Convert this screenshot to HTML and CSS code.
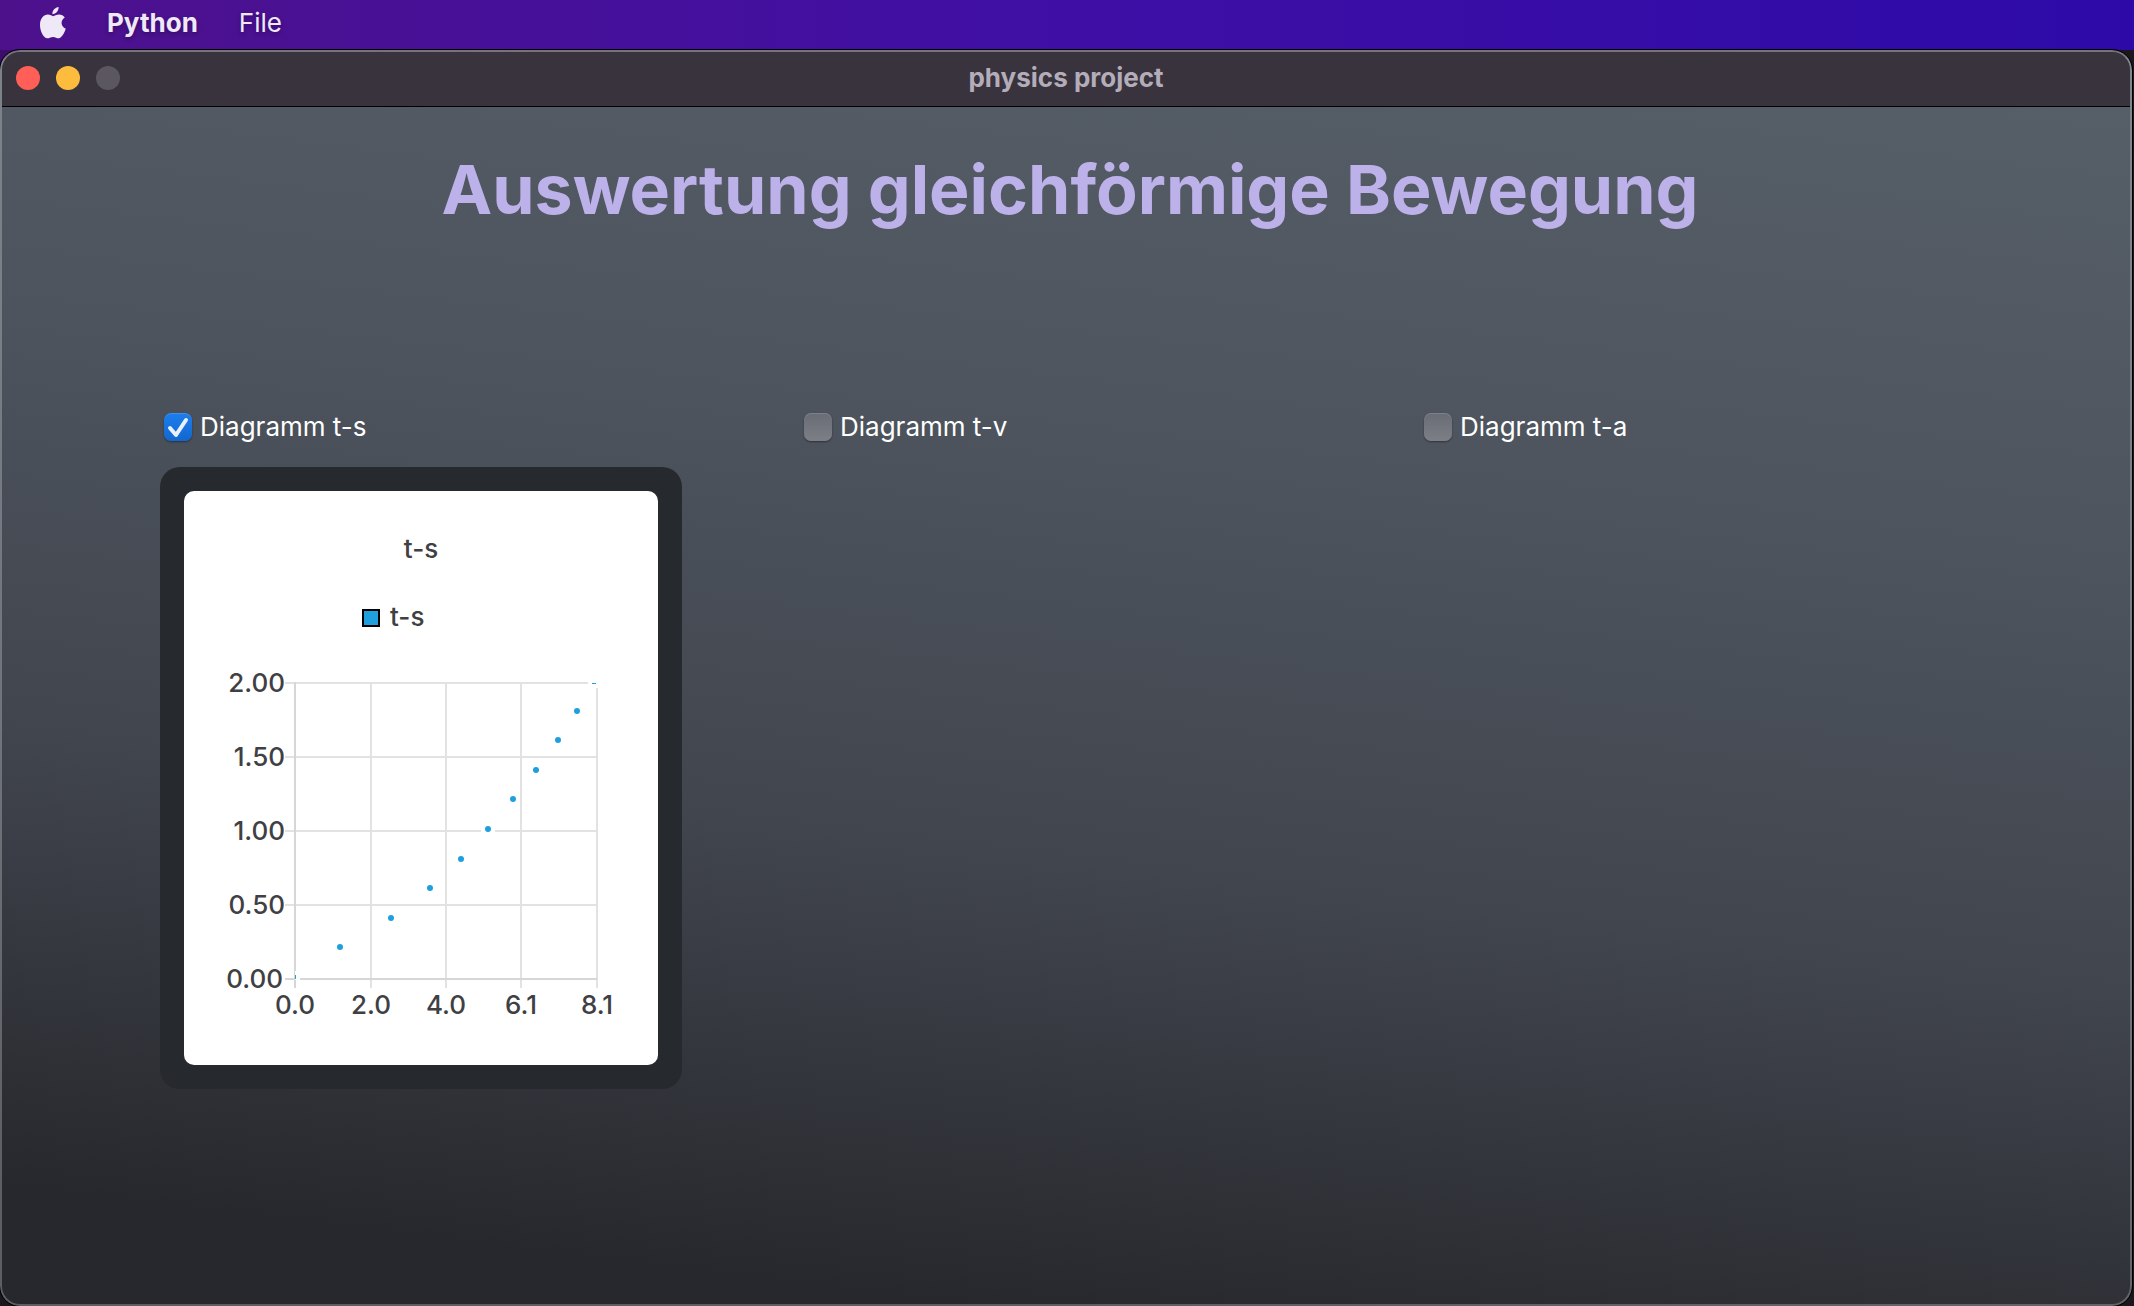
FILE: index.html
```html
<!DOCTYPE html>
<html lang="de">
<head>
<meta charset="utf-8">
<title>physics project</title>
<link rel="stylesheet" href="styles.css">
</head>
<body>
<header class="menubar">
  <button class="menu-item menu-apple" aria-label="Apple">
    <svg class="apple" viewBox="0 0 26 32" aria-hidden="true">
      <path d="M18.6 0c.2 3.900-2.900 7.200-6.200 7.200C12.100 3.500 15.300.3 18.600 0z"/>
      <path d="M13.200 9.200c1.400 0 3.200-1.600 5.900-1.600 2.300 0 4.400 1.200 5.700 3-4.800 2.900-4 9.300 1 11.200-.9 2.500-3.400 8.800-6.800 9.500-2.100.3-3.200-1.400-5.900-1.400s-3.900 1.400-5.800 1.400C3.600 31.300 0 24.300 0 18c0-6.500 3.900-10.400 7.800-10.400 2.400 0 4.100 1.600 5.400 1.600z"/>
    </svg>
  </button>
  <button class="menu-item menu-app">Python</button>
  <button class="menu-item">File</button>
</header>
<main class="window">
  <div class="titlebar">
    <div class="lights">
      <button class="light light-close" aria-label="Close"></button>
      <button class="light light-minimize" aria-label="Minimize"></button>
      <button class="light light-zoom" aria-label="Zoom" disabled></button>
    </div>
    <span class="window-title">physics project</span>
  </div>
  <div class="content">
    <h1 class="heading">Auswertung gleichförmige Bewegung</h1>
    <div class="diagrams">
      <section class="diagram">
        <label class="option"><input class="check" type="checkbox" checked>Diagramm t-s</label>
        <div class="card">
          <svg class="chart" viewBox="0 0 474 574" role="img" aria-label="t-s">
            <g class="grid">
              <path d="M101 192H413M101 266H413M101 340H413M101 414H413"/>
              <path d="M187 192V497M262 192V497M337 192V497M413 192V497"/>
            </g>
            <path class="axis" d="M101 488H413M111 191V497"/>
            <path class="gap" d="M404 192H413V197M297 340H311M112 480V488H116"/>
            <g class="points">
              <circle cx="156" cy="456" r="3"/>
              <circle cx="207" cy="427" r="3"/>
              <circle cx="246" cy="397" r="3"/>
              <circle cx="277" cy="368" r="3"/>
              <circle cx="304" cy="338" r="3"/>
              <circle cx="329" cy="308" r="3"/>
              <circle cx="352" cy="279" r="3"/>
              <circle cx="374" cy="249" r="3"/>
              <circle cx="393" cy="220" r="3"/>
              <path d="M408 192h4v1h-4zM111 484h1v4h-1z"/>
            </g>
            <text class="middle" x="237" y="67">t-s</text>
            <rect class="swatch" x="179" y="119" width="16" height="16"/>
            <text x="206" y="135">t-s</text>
            <g class="end">
              <text x="101" y="201">2.00</text>
              <text x="101" y="275">1.50</text>
              <text x="101" y="349">1.00</text>
              <text x="101" y="423">0.50</text>
              <text x="99" y="497">0.00</text>
            </g>
            <g class="middle">
              <text x="111" y="523">0.0</text>
              <text x="187" y="523">2.0</text>
              <text x="262" y="523">4.0</text>
              <text x="337" y="523">6.1</text>
              <text x="413" y="523">8.1</text>
            </g>
          </svg>
        </div>
      </section>
      <section class="diagram">
        <label class="option"><input class="check" type="checkbox">Diagramm t-v</label>
      </section>
      <section class="diagram">
        <label class="option"><input class="check" type="checkbox">Diagramm t-a</label>
      </section>
    </div>
  </div>
</main>
</body>
</html>
```
FILE: styles.css
```css
* {
  box-sizing: border-box;
}

body {
  margin: 0;
  min-height: 100vh;
  display: flex;
  flex-direction: column;
  background: linear-gradient(90deg, #3c0d6c, #1b181d) 0 0 / 100% 80px no-repeat #1b181d;
  color: #fff;
  font: 26px/32px Inter, "Liberation Sans", sans-serif;
}

button {
  border: 0;
  padding: 0;
  background: none;
  color: inherit;
  font: inherit;
}

.menubar {
  display: flex;
  align-items: center;
  gap: 41px;
  height: 50px;
  padding: 0 40px 5px;
  background: linear-gradient(90deg, #4d118c, #3f0fa5 50%, #2d0aa8);
  color: #efe8f6;
}

.menu-item {
  text-shadow: 0 2px 4px rgba(0, 0, 0, 0.3);
}

.menu-app {
  font-weight: 700;
}

.apple {
  display: block;
  width: 26px;
  height: 32px;
  fill: currentColor;
}

.window {
  flex: 1;
  display: flex;
  flex-direction: column;
  margin-right: 2px;
  border: 2px solid rgba(255, 255, 255, 0.25);
  border-top-color: #77727b;
  border-radius: 20px;
  outline: 1px solid #000;
  overflow: hidden;
  background: linear-gradient(187deg, #575f68, #4d545d 34%, #41454e 62%, #27282d 92%, #27282d) border-box;
}

.titlebar {
  display: grid;
  grid-template-columns: 1fr auto 1fr;
  align-items: center;
  height: 55px;
  padding: 0 14px 2px;
  border-bottom: 1px solid #000;
  background: #38333d;
}

.lights {
  display: flex;
  gap: 16px;
}

.light {
  width: 24px;
  height: 24px;
  border-radius: 50%;
}

.light-close {
  background: #ff5f57;
}

.light-minimize {
  background: #febc3e;
}

.light-zoom {
  background: #5b5761;
}

.window-title {
  color: #b4adb9;
  font-weight: 700;
}

.content {
  padding: 40px 150px 64px 158px;
}

.heading {
  margin: 0 0 180px;
  color: #bcb1e8;
  font-size: 68px;
  line-height: 84px;
  font-weight: 700;
  text-align: center;
}

.diagrams {
  display: grid;
  grid-template-columns: 640fr 620fr 560fr;
}

.option {
  display: flex;
  align-items: center;
  gap: 8px;
  padding: 0 4px;
}

.check {
  appearance: none;
  width: 28px;
  height: 28px;
  margin: 0;
  border-radius: 7px;
  background: linear-gradient(#696c74, #7c7f86);
  box-shadow: 0 1px 2px rgba(0, 0, 0, 0.4), inset 0 1px rgba(255, 255, 255, 0.15);
}

.check:checked {
  background: url("data:image/svg+xml,%3Csvg xmlns='http://www.w3.org/2000/svg' viewBox='0 0 28 28'%3E%3Cpath d='M6 15l6 7L22 7' fill='none' stroke='%23e8f0fc' stroke-width='4' stroke-linecap='round' stroke-linejoin='round'/%3E%3C/svg%3E"), linear-gradient(#1c7eec, #1267d0);
}

.card {
  width: 522px;
  max-width: 100%;
  margin-top: 24px;
  padding: 24px;
  border-radius: 20px;
  background: #26292e;
}

.chart {
  display: block;
  width: 100%;
  border-radius: 10px;
  background: #fff;
  fill: #404044;
  font-weight: 500;
}

.grid {
  fill: none;
  stroke: #e2e2e2;
  stroke-width: 2;
}

.axis {
  fill: none;
  stroke: #d6d6d6;
  stroke-width: 2;
}

.gap {
  fill: none;
  stroke: #fff;
  stroke-width: 2;
}

.points {
  fill: #209fdf;
}

.swatch {
  fill: #209fdf;
  stroke: #000;
  stroke-width: 2;
}

.middle {
  text-anchor: middle;
}

.end {
  text-anchor: end;
}
```
